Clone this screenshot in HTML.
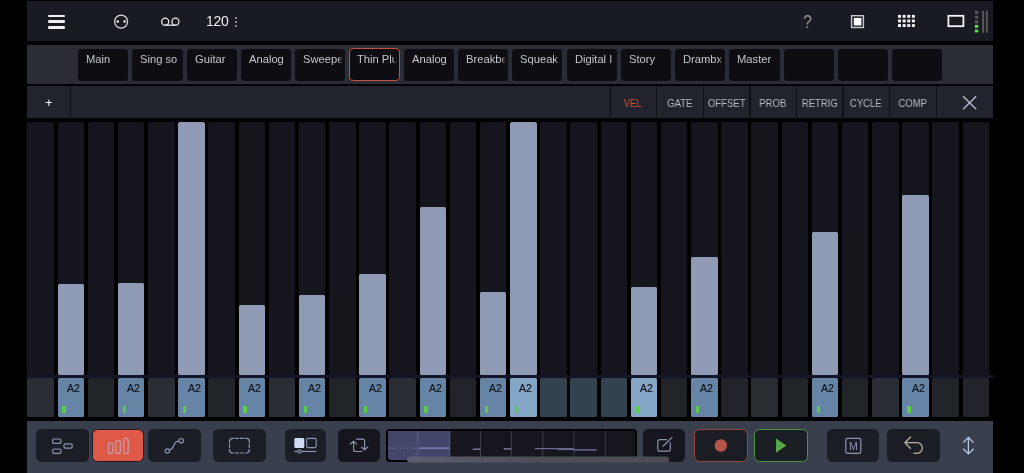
<!DOCTYPE html><html><head><meta charset="utf-8"><style>
*{margin:0;padding:0;box-sizing:border-box}
html,body{width:1024px;height:473px;background:#000;overflow:hidden;position:relative;font-family:"Liberation Sans",sans-serif}
.a{position:absolute}
.top{left:27.3px;top:1px;width:966px;height:40.2px;background:#191b22}
.tabs{left:27.3px;top:45px;width:966px;height:39.3px;background:#2a2d36}
.tab{position:absolute;top:48.6px;height:32.4px;width:50.2px;background:#0e0e12;border-radius:3.5px;overflow:hidden;color:#c2c6ce;font-size:11.2px;line-height:12px;padding:4.6px 0 0 8px;white-space:nowrap}
.tab span{display:block;overflow:hidden;width:40px;-webkit-mask-image:linear-gradient(to right,#000 35.5px,transparent 40px);will-change:transform}
.tab.sel{border:1.5px solid #c3523f;padding:3.4px 0 0 7.3px;margin-left:-0.8px;width:51.2px;top:48.3px;height:33px;border-radius:4px}
.par{left:27.3px;top:86px;width:966px;height:32px;background:#21242c}
.pc{position:absolute;top:87px;height:32px;color:#b6bac2;font-size:10.6px;text-align:center;line-height:32px;transform:scaleX(0.9);will-change:transform}
.dv{position:absolute;top:86px;height:32px;width:1.3px;background:#0f1014}
.col{position:absolute;top:122px;height:252.5px;background:#14151d;border-radius:1.5px;overflow:hidden}
.bar{position:absolute;bottom:0;left:0;right:0;background:#8f9bb4;border-radius:1.5px 1.5px 0 0}
.nl{left:27.3px;top:374.7px;width:966px;height:3.2px;background:#15152a}
.nc{position:absolute;top:378px;height:39px;background:#212429;border-radius:1.5px}
.nc.bt{background:#2a2d33}
.nc.on{background:#6584a6}
.nc.r{background:#32424f}
.nc.r.on{background:#84a6c6}
.nc b{position:absolute;font-weight:normal;color:#0e1014;font-size:10.5px;top:3.6px;right:4.3px;-webkit-text-stroke:0.15px #0e1014;line-height:12px;will-change:transform}
.nc i{position:absolute;left:4.8px;top:28px;width:3.4px;height:7px;background:#5ccc48}
.tb{left:27.3px;top:420.6px;width:966px;height:52.4px;background:#3a3f4e}
.btn{position:absolute;top:429px;height:33px;background:#1c1e26;border-radius:5.5px}
</style></head><body>
<div class="a top"></div>
<div class="a" style="left:48.3px;top:14.850000000000001px;width:17px;height:2.5px;background:#f0f0f0;border-radius:1.2px"></div>
<div class="a" style="left:48.3px;top:20.45px;width:17px;height:2.5px;background:#f0f0f0;border-radius:1.2px"></div>
<div class="a" style="left:48.3px;top:26.05px;width:17px;height:2.5px;background:#f0f0f0;border-radius:1.2px"></div>
<svg class="a" style="left:0;top:0" width="1024" height="45" viewBox="0 0 1024 45">
<circle cx="121.1" cy="21.6" r="6.5" fill="none" stroke="#d8d8d8" stroke-width="1.3"/>
<circle cx="117.7" cy="21.6" r="1.25" fill="#f4f4f4"/><circle cx="124.6" cy="21.6" r="1.25" fill="#f4f4f4"/>
<circle cx="165.2" cy="21.7" r="3.5" fill="none" stroke="#e8e8e8" stroke-width="1.3"/>
<circle cx="175.4" cy="21.7" r="3.5" fill="none" stroke="#e8e8e8" stroke-width="1.3"/>
<line x1="165.2" y1="25.2" x2="175.4" y2="25.2" stroke="#e8e8e8" stroke-width="1.3"/>
<circle cx="235.9" cy="18" r="0.9" fill="#c0c0c0"/><circle cx="235.9" cy="22" r="0.9" fill="#c0c0c0"/><circle cx="235.9" cy="26" r="0.9" fill="#c0c0c0"/>
<rect x="851.6" y="15.7" width="11.8" height="11.8" fill="none" stroke="#c8c8c8" stroke-width="1.4"/>
<rect x="853.8" y="17.9" width="7.6" height="7.6" fill="#fff"/>
<rect x="948.4" y="15.8" width="15" height="10.4" fill="none" stroke="#f4f4f4" stroke-width="1.8"/>

<rect x="898.00" y="14.90" width="3" height="2.9" fill="#f4f4f4"/>
<rect x="902.63" y="14.90" width="3" height="2.9" fill="#f4f4f4"/>
<rect x="907.26" y="14.90" width="3" height="2.9" fill="#f4f4f4"/>
<rect x="911.89" y="14.90" width="3" height="2.9" fill="#f4f4f4"/>
<rect x="898.00" y="19.50" width="3" height="2.9" fill="#f4f4f4"/>
<rect x="902.63" y="19.50" width="3" height="2.9" fill="#f4f4f4"/>
<rect x="907.26" y="19.50" width="3" height="2.9" fill="#f4f4f4"/>
<rect x="911.89" y="19.50" width="3" height="2.9" fill="#f4f4f4"/>
<rect x="898.00" y="24.10" width="3" height="2.9" fill="#f4f4f4"/>
<rect x="902.63" y="24.10" width="3" height="2.9" fill="#f4f4f4"/>
<rect x="907.26" y="24.10" width="3" height="2.9" fill="#f4f4f4"/>
<rect x="911.89" y="24.10" width="3" height="2.9" fill="#f4f4f4"/>
<rect x="974.9" y="10.9" width="3.4" height="2.9" fill="#5a5a5a"/>
<rect x="974.9" y="15.7" width="3.4" height="2.9" fill="#5a5a5a"/>
<rect x="974.9" y="20.4" width="3.4" height="2.9" fill="#5a5a5a"/>
<rect x="974.9" y="24.9" width="3.4" height="2.9" fill="#5ee04a"/>
<rect x="974.9" y="29.5" width="3.4" height="2.9" fill="#5ee04a"/>
<rect x="982.2" y="10.9" width="1.9" height="21.8" fill="#5a5a5a"/><rect x="985.9" y="10.9" width="1.9" height="21.8" fill="#5a5a5a"/>
</svg>
<div class="a" style="left:205.5px;top:13px;font-size:14px;line-height:17px;color:#eee;letter-spacing:-0.3px;will-change:transform">120</div>
<div class="a" style="left:802.6px;top:12.2px;font-size:18.5px;line-height:19px;color:#9a9a9a;will-change:transform;transform:scaleX(0.86);transform-origin:0 0">?</div>
<div class="a tabs"></div>
<div class="tab" style="left:78.10px"><span>Main</span></div>
<div class="tab" style="left:132.37px"><span>Sing so</span></div>
<div class="tab" style="left:186.64px"><span>Guitar</span></div>
<div class="tab" style="left:240.91px"><span>Analog</span></div>
<div class="tab" style="left:295.18px"><span>Sweeper</span></div>
<div class="tab sel" style="left:349.45px"><span>Thin Pluck</span></div>
<div class="tab" style="left:403.72px"><span>Analog</span></div>
<div class="tab" style="left:457.99px"><span>Breakbeat</span></div>
<div class="tab" style="left:512.26px"><span>Squeak</span></div>
<div class="tab" style="left:566.53px"><span>Digital I</span></div>
<div class="tab" style="left:620.80px"><span>Story</span></div>
<div class="tab" style="left:675.07px"><span>Drambxx</span></div>
<div class="tab" style="left:729.34px"><span>Master</span></div>
<div class="tab" style="left:783.61px"><span></span></div>
<div class="tab" style="left:837.88px"><span></span></div>
<div class="tab" style="left:892.15px"><span></span></div>
<div class="a par"></div>
<div class="dv" style="left:70px"></div>
<div class="a" style="left:45px;top:94px;color:#eee;font-size:13px;line-height:18px;will-change:transform">+</div>
<div class="dv" style="left:609.7px"></div>
<div class="pc" style="left:610.7px;width:45.5px;color:#d8503c;margin-left:-1px">VEL</div>
<div class="dv" style="left:656.2px"></div>
<div class="pc" style="left:657.2px;width:45.5px">GATE</div>
<div class="dv" style="left:702.8px"></div>
<div class="pc" style="left:703.8px;width:45.5px">OFFSET</div>
<div class="dv" style="left:749.3px"></div>
<div class="pc" style="left:750.3px;width:45.5px">PROB</div>
<div class="dv" style="left:795.9px"></div>
<div class="pc" style="left:796.9px;width:45.5px">RETRIG</div>
<div class="dv" style="left:842.4px"></div>
<div class="pc" style="left:843.4px;width:45.5px">CYCLE</div>
<div class="dv" style="left:888.9px"></div>
<div class="pc" style="left:889.9px;width:45.5px">COMP</div>
<div class="dv" style="left:935.5px"></div>
<svg class="a" style="left:960px;top:93px" width="20" height="20"><path d="M3.1 3.2 L16.2 16.2 M16.2 3.2 L3.1 16.2" stroke="#bcc4d8" stroke-width="1.2"/></svg>
<div class="col" style="left:27.45px;width:26.45px"></div>
<div class="col" style="left:57.62px;width:26.45px"><div class="bar" style="height:90.5px"></div></div>
<div class="col" style="left:87.79px;width:26.45px"></div>
<div class="col" style="left:117.95px;width:26.45px"><div class="bar" style="height:91.5px"></div></div>
<div class="col" style="left:148.12px;width:26.45px"></div>
<div class="col" style="left:178.29px;width:26.45px"><div class="bar" style="height:252.6px"></div></div>
<div class="col" style="left:208.46px;width:26.45px"></div>
<div class="col" style="left:238.63px;width:26.45px"><div class="bar" style="height:69.6px"></div></div>
<div class="col" style="left:268.79px;width:26.45px"></div>
<div class="col" style="left:298.96px;width:26.45px"><div class="bar" style="height:79.8px"></div></div>
<div class="col" style="left:329.13px;width:26.45px"></div>
<div class="col" style="left:359.30px;width:26.45px"><div class="bar" style="height:100.7px"></div></div>
<div class="col" style="left:389.47px;width:26.45px"></div>
<div class="col" style="left:419.63px;width:26.45px"><div class="bar" style="height:167.6px"></div></div>
<div class="col" style="left:449.80px;width:26.45px"></div>
<div class="col" style="left:479.97px;width:26.45px"><div class="bar" style="height:82.4px"></div></div>
<div class="col" style="left:510.14px;width:26.45px"><div class="bar" style="height:252.6px"></div></div>
<div class="col" style="left:540.31px;width:26.45px"></div>
<div class="col" style="left:570.47px;width:26.45px"></div>
<div class="col" style="left:600.64px;width:26.45px"></div>
<div class="col" style="left:630.81px;width:26.45px"><div class="bar" style="height:87.7px"></div></div>
<div class="col" style="left:660.98px;width:26.45px"></div>
<div class="col" style="left:691.15px;width:26.45px"><div class="bar" style="height:117.7px"></div></div>
<div class="col" style="left:721.31px;width:26.45px"></div>
<div class="col" style="left:751.48px;width:26.45px"></div>
<div class="col" style="left:781.65px;width:26.45px"></div>
<div class="col" style="left:811.82px;width:26.45px"><div class="bar" style="height:142.7px"></div></div>
<div class="col" style="left:841.99px;width:26.45px"></div>
<div class="col" style="left:872.15px;width:26.45px"></div>
<div class="col" style="left:902.32px;width:26.45px"><div class="bar" style="height:179.6px"></div></div>
<div class="col" style="left:932.49px;width:26.45px"></div>
<div class="col" style="left:962.66px;width:26.45px"></div>
<div class="a nl"></div>
<div class="nc bt" style="left:27.45px;width:26.45px"></div>
<div class="nc on" style="left:57.62px;width:26.45px"><b>A2</b><i></i></div>
<div class="nc" style="left:87.79px;width:26.45px"></div>
<div class="nc on" style="left:117.95px;width:26.45px"><b>A2</b><i></i></div>
<div class="nc bt" style="left:148.12px;width:26.45px"></div>
<div class="nc on" style="left:178.29px;width:26.45px"><b>A2</b><i></i></div>
<div class="nc" style="left:208.46px;width:26.45px"></div>
<div class="nc on" style="left:238.63px;width:26.45px"><b>A2</b><i></i></div>
<div class="nc bt" style="left:268.79px;width:26.45px"></div>
<div class="nc on" style="left:298.96px;width:26.45px"><b>A2</b><i></i></div>
<div class="nc" style="left:329.13px;width:26.45px"></div>
<div class="nc on" style="left:359.30px;width:26.45px"><b>A2</b><i></i></div>
<div class="nc bt" style="left:389.47px;width:26.45px"></div>
<div class="nc on" style="left:419.63px;width:26.45px"><b>A2</b><i></i></div>
<div class="nc" style="left:449.80px;width:26.45px"></div>
<div class="nc on" style="left:479.97px;width:26.45px"><b>A2</b><i></i></div>
<div class="nc r on" style="left:510.14px;width:26.45px"><b>A2</b><i></i></div>
<div class="nc r" style="left:540.31px;width:26.45px"></div>
<div class="nc r" style="left:570.47px;width:26.45px"></div>
<div class="nc r" style="left:600.64px;width:26.45px"></div>
<div class="nc r on" style="left:630.81px;width:26.45px"><b>A2</b><i></i></div>
<div class="nc" style="left:660.98px;width:26.45px"></div>
<div class="nc on" style="left:691.15px;width:26.45px"><b>A2</b><i></i></div>
<div class="nc" style="left:721.31px;width:26.45px"></div>
<div class="nc bt" style="left:751.48px;width:26.45px"></div>
<div class="nc" style="left:781.65px;width:26.45px"></div>
<div class="nc on" style="left:811.82px;width:26.45px"><b>A2</b><i></i></div>
<div class="nc" style="left:841.99px;width:26.45px"></div>
<div class="nc bt" style="left:872.15px;width:26.45px"></div>
<div class="nc on" style="left:902.32px;width:26.45px"><b>A2</b><i></i></div>
<div class="nc" style="left:932.49px;width:26.45px"></div>
<div class="nc" style="left:962.66px;width:26.45px"></div>
<div class="a tb"></div>
<div class="btn" style="left:35.9px;width:52.7px"></div>
<div class="btn" style="left:148.2px;width:52.7px"></div>
<div class="btn" style="left:213.1px;width:52.7px"></div>
<div class="btn" style="left:284.5px;width:41.5px"></div>
<div class="btn" style="left:338.2px;width:41.8px;background:#16161e"></div>
<div class="btn" style="left:643.3px;width:41.4px;background:#16161e"></div>
<div class="btn" style="left:826.7px;width:52.7px"></div>
<div class="btn" style="left:887.3px;width:52.7px"></div>
<div class="btn" style="left:91.9px;width:52.4px;background:#df5948;border:1.8px solid #221a20;top:429.4px;height:32.4px"></div>
<div class="btn" style="left:693.9px;width:53.7px;border:1.7px solid #984842;height:33.2px"></div>
<div class="btn" style="left:754.4px;width:53.4px;border:1.7px solid #4a9440;height:33.2px"></div>
<div class="a" style="left:385.7px;top:429.3px;width:251px;height:32.4px;background:#000;border-radius:4px"></div>
<div class="a" style="left:387.9px;top:431px;width:247px;height:26px;background:#16161e"></div>
<div class="a" style="left:387.9px;top:431px;width:62px;height:29.3px;background:#434668;border-radius:0 0 0 3px"></div>
<svg class="a" style="left:0;top:420px" width="1024" height="53" viewBox="0 420 1024 53"><rect x="52.6" y="439" width="8.4" height="4.3" rx="1.4" fill="none" stroke="#8b94b2" stroke-width="1.2"/><rect x="64" y="443.9" width="8.2" height="4.3" rx="1.4" fill="none" stroke="#8b94b2" stroke-width="1.2"/><rect x="52.6" y="449" width="8.4" height="4.3" rx="1.4" fill="none" stroke="#8b94b2" stroke-width="1.2"/><rect x="108.5" y="443" width="4.4" height="10.4" rx="1.3" fill="none" stroke="#c6a0aa" stroke-width="1.2"/><rect x="115.9" y="440.8" width="4.4" height="12.6" rx="1.3" fill="none" stroke="#c6a0aa" stroke-width="1.2"/><rect x="123.8" y="438.4" width="4.4" height="15" rx="1.3" fill="none" stroke="#c6a0aa" stroke-width="1.2"/><circle cx="167.4" cy="451" r="2.2" fill="none" stroke="#8b94b2" stroke-width="1.2"/><circle cx="181.2" cy="440.7" r="2.2" fill="none" stroke="#8b94b2" stroke-width="1.2"/><path d="M169.4 450 C173 449 173.5 446 174.5 444 C175.5 441.8 177 441 179 441" fill="none" stroke="#8b94b2" stroke-width="1.2"/><rect x="229.5" y="438.4" width="19.8" height="14.6" rx="3" fill="none" stroke="#8d96b0" stroke-width="1.2"/><rect x="233.95000000000002" y="437" width="0.9" height="3" fill="#1c1e26"/><rect x="233.95000000000002" y="452" width="0.9" height="3" fill="#1c1e26"/><rect x="238.95000000000002" y="437" width="0.9" height="3" fill="#1c1e26"/><rect x="238.95000000000002" y="452" width="0.9" height="3" fill="#1c1e26"/><rect x="243.95000000000002" y="437" width="0.9" height="3" fill="#1c1e26"/><rect x="243.95000000000002" y="452" width="0.9" height="3" fill="#1c1e26"/><rect x="228" y="442.75" width="3" height="0.9" fill="#1c1e26"/><rect x="248" y="442.75" width="3" height="0.9" fill="#1c1e26"/><rect x="228" y="447.95" width="3" height="0.9" fill="#1c1e26"/><rect x="248" y="447.95" width="3" height="0.9" fill="#1c1e26"/><rect x="294.3" y="437.9" width="10" height="10" rx="1.5" fill="#d0dcf5"/><rect x="306.6" y="438.4" width="9.6" height="9.2" rx="1.5" fill="none" stroke="#8b94b2" stroke-width="1.1"/><line x1="294.3" y1="451.5" x2="316.3" y2="451.5" stroke="#8b94b2" stroke-width="1.2"/><circle cx="299.4" cy="451.5" r="1.6" fill="#1c1e26" stroke="#8b94b2" stroke-width="1.1"/><path d="M361.9 451.5 H355.6 A2 2 0 0 1 353.6 449.5 V441.6 M350.4 444 L353.5 441.1 L356.6 444 M356.4 439.1 H362.6 A2 2 0 0 1 364.6 441.1 V449.4 M361.5 447 L364.6 449.9 L367.8 447" fill="none" stroke="#8e96ae" stroke-width="1.15" stroke-linecap="round" stroke-linejoin="round"/><rect x="480.0" y="431" width="1" height="26" fill="#3b3f48"/><rect x="510.9" y="431" width="1" height="26" fill="#3b3f48"/><rect x="542.3" y="431" width="1" height="26" fill="#3b3f48"/><rect x="573.5" y="431" width="1" height="26" fill="#3b3f48"/><rect x="604.9" y="431" width="1" height="26" fill="#3b3f48"/><rect x="417.1" y="431" width="1" height="29" fill="#5c6086"/><rect x="449.5" y="431" width="0.8" height="29" fill="#5a5e80"/><rect x="389.0" y="447.5" width="1.3" height="1.3" fill="#6f70a0"/><rect x="392.6" y="447.5" width="1.3" height="1.3" fill="#6f70a0"/><rect x="396.2" y="447.5" width="1.3" height="1.3" fill="#6f70a0"/><rect x="399.8" y="447.5" width="1.3" height="1.3" fill="#6f70a0"/><rect x="403.4" y="447.5" width="1.3" height="1.3" fill="#6f70a0"/><rect x="407.0" y="447.5" width="1.3" height="1.3" fill="#6f70a0"/><rect x="410.6" y="447.5" width="1.3" height="1.3" fill="#6f70a0"/><rect x="414.2" y="447.5" width="1.3" height="1.3" fill="#6f70a0"/><rect x="419" y="447.3" width="30.5" height="1.8" fill="#7a7aa8"/><rect x="472.7" y="448.4" width="7.8" height="1.6" fill="#6f6f9a"/><rect x="503.7" y="448.1" width="7.8" height="1.6" fill="#6f6f9a"/><rect x="534.9" y="448" width="38.7" height="1.2" fill="#6a6a94"/><rect x="557.9" y="448.3" width="15.7" height="1.8" fill="#6a6a94"/><rect x="573.6" y="449.1" width="23.2" height="1.5" fill="#6a6a94"/><defs><linearGradient id="sg" x1="0" x2="1"><stop offset="0" stop-color="#5c5e70"/><stop offset="0.5" stop-color="#4e4e56"/><stop offset="1" stop-color="#4c4c52"/></linearGradient></defs><rect x="407" y="456.6" width="262" height="6" rx="3" fill="url(#sg)"/><path d="M667 439.7 H659.8 A2 2 0 0 0 657.8 441.7 V449.2 A2 2 0 0 0 659.8 451.2 H668.3 A2 2 0 0 0 670.3 449.2 V442.3" fill="none" stroke="#8a92ac" stroke-width="1.2"/><line x1="663" y1="446.3" x2="672" y2="437.4" stroke="#8a92ac" stroke-width="1.2" stroke-linecap="round"/><circle cx="720.8" cy="445.5" r="6.2" fill="#b5544a"/><path d="M776 438.5 L786.4 445.6 L776 452.8 Z" fill="#58a84a"/><rect x="845.8" y="438.3" width="15" height="15" rx="1.5" fill="none" stroke="#8b94b2" stroke-width="1.2"/><text x="853.3" y="449.6" text-anchor="middle" font-family="Liberation Sans" font-size="10.5" fill="#8b94b2" style="will-change:transform">M</text><path d="M905 442.7 H917 A5.35 5.35 0 0 1 917 453.4 H913.4 M910.8 436.7 L904.9 442.7 L910.8 448.7" fill="none" stroke="#bcae9c" stroke-width="1.3"/><path d="M968.4 437.6 V454 M963.2 442.6 L968.4 437.5 L973.6 442.6 M963.2 448.7 L968.4 453.9 L973.6 448.7" fill="none" stroke="#b8c8e8" stroke-width="1.3"/></svg>
</body></html>
